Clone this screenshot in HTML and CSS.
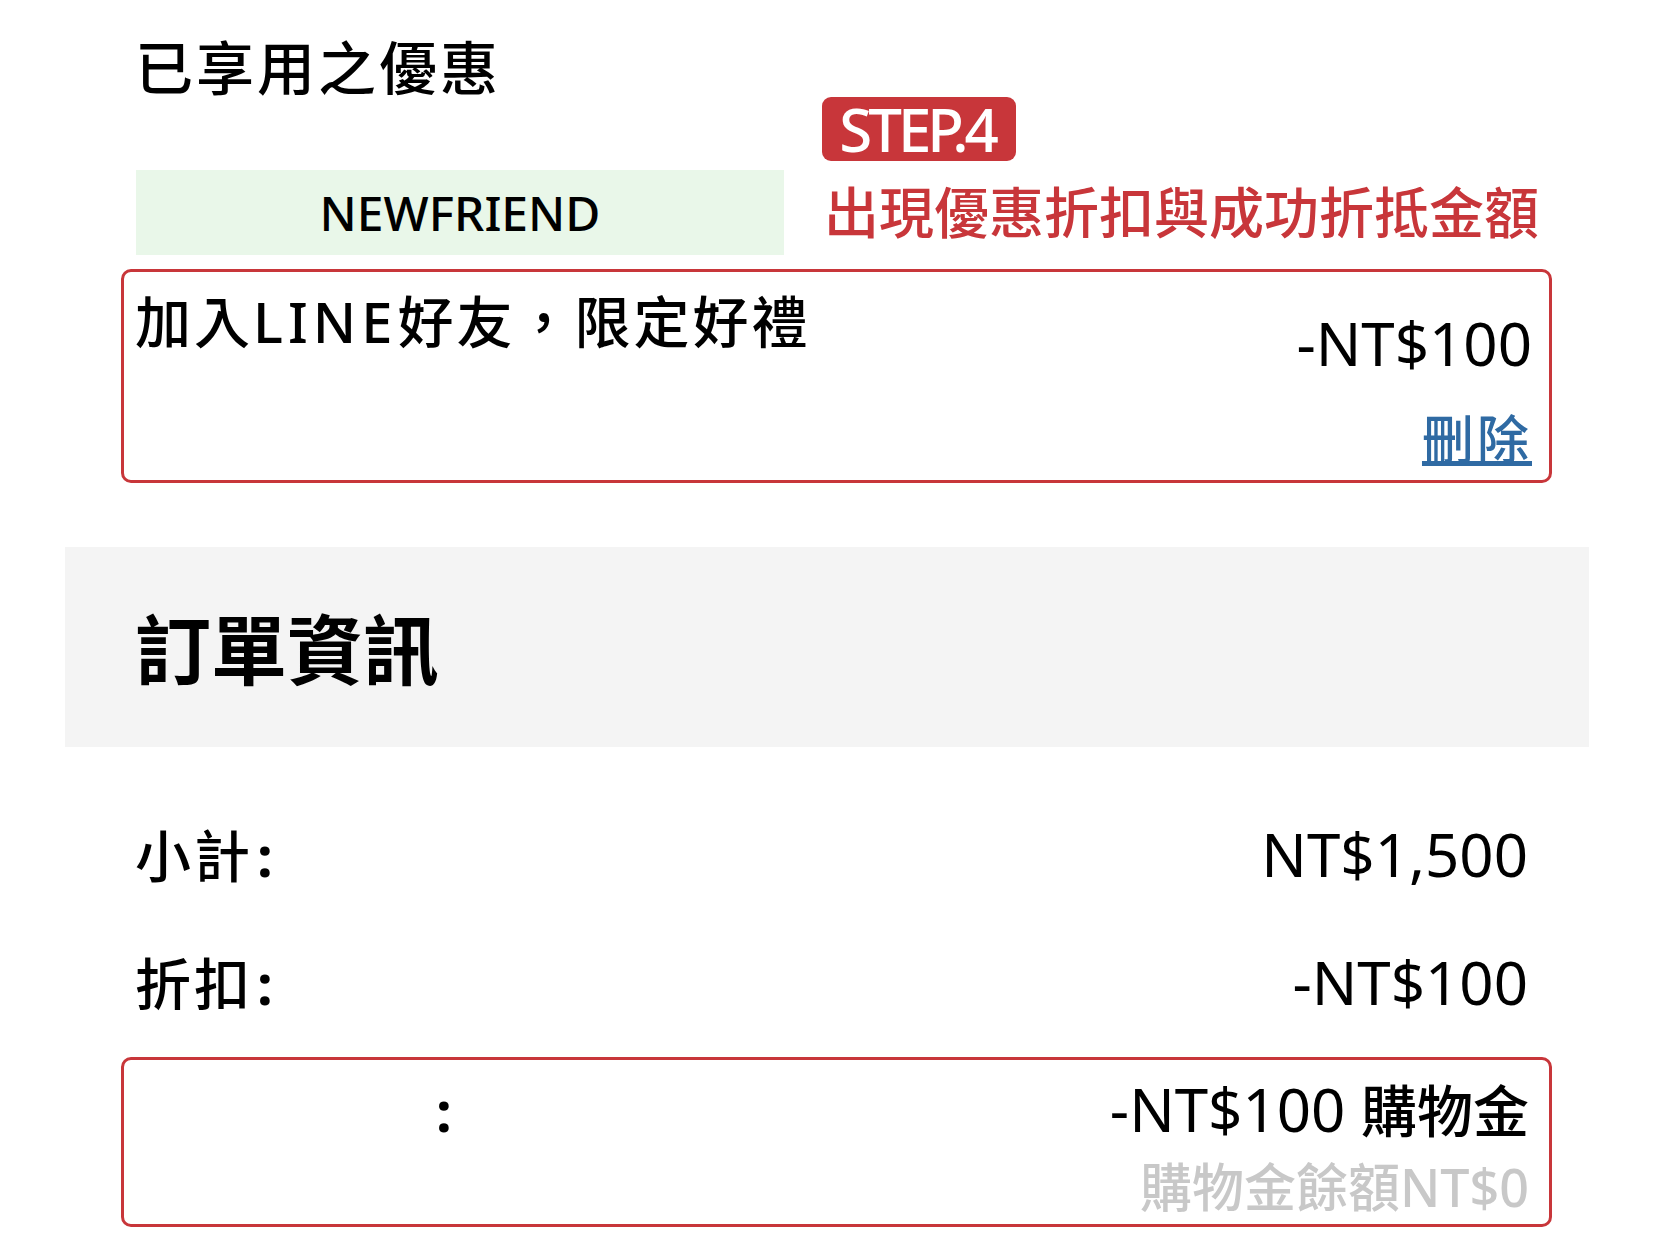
FILE: index.html
```html
<!DOCTYPE html>
<html lang="zh-Hant">
<head>
<meta charset="utf-8">
<title>訂單資訊</title>
<link rel="stylesheet" href="styles.css">
</head>
<body>
<div class="page">
  <section class="coupons">
    <h2 class="title">已享用之優惠</h2>
    <div class="code-row">
      <div class="code-box">NEWFRIEND</div>
      <div class="annotation">
        <span class="step">STEP.4</span>
        <p class="note">出現優惠折扣與成功折抵金額</p>
      </div>
    </div>
    <div class="highlight coupon">
      <div class="coupon-name">加入<span class="latin">LINE</span>好友，限定好禮</div>
      <div class="coupon-side">
        <div class="amount">-NT$100</div>
        <a class="remove" href="#">刪除</a>
      </div>
    </div>
  </section>

  <div class="band">
    <h2 class="band-title">訂單資訊</h2>
  </div>

  <section class="summary">
    <div class="row first">
      <span class="label">小計<span class="colon">:</span></span>
      <span class="amount">NT$1,500</span>
    </div>
    <div class="row second">
      <span class="label">折扣<span class="colon">:</span></span>
      <span class="amount">-NT$100</span>
    </div>
    <div class="highlight credit">
      <div class="row">
        <span class="label blank"><span class="colon">:</span></span>
        <span class="amount">-NT$100 <span class="cjk">購物金</span></span>
      </div>
      <div class="balance">購物金餘額NT$0</div>
    </div>
  </section>
</div>
</body>
</html>
```

FILE: styles.css
```css
html, body {
  margin: 0;
  padding: 0;
  background: #ffffff;
}

body {
  font-family: "Noto Sans", "Noto Sans CJK TC", sans-serif;
  color: #000000;
}

.page {
  padding: 39px 66px 0 65px;
}

.coupons {
  padding: 0 61px 0 70px;
}

.title {
  margin: 0;
  font-size: 58px;
  line-height: 1;
  font-weight: 500;
  letter-spacing: 3px;
}

.code-row {
  display: flex;
  align-items: flex-start;
}

.code-box {
  margin-top: 73px;
  margin-left: 1px;
  width: 648px;
  height: 85px;
  flex: none;
  background: #e9f7e9;
  display: flex;
  align-items: center;
  justify-content: center;
  font-size: 48px;
  font-weight: 500;
  line-height: 1;
}

.annotation {
  margin-left: 38px;
  display: flex;
  flex-direction: column;
  align-items: flex-start;
}

.step {
  display: inline-flex;
  align-items: center;
  justify-content: center;
  width: 194px;
  height: 64px;
  background: #c8363a;
  border-radius: 9px;
  color: #ffffff;
  font-size: 60px;
  font-weight: 500;
  letter-spacing: -4px;
  line-height: 1;
  padding-right: 4px;
  box-sizing: border-box;
}

.note {
  margin: 23px 0 0 2px;
  color: #c8363a;
  font-size: 55px;
  font-weight: 500;
  line-height: 1;
  white-space: nowrap;
}

.highlight {
  border: 3px solid #c8363a;
  border-radius: 10px;
}

.coupon {
  margin: 14px -24px 0 -14px;
  padding: 21px 17px 15px 11px;
  display: flex;
  justify-content: space-between;
  align-items: flex-start;
}

.coupon-name {
  font-size: 56px;
  font-weight: 500;
  line-height: 1;
  letter-spacing: 3px;
}

.coupon-name .latin {
  letter-spacing: 5px;
}

.coupon-side {
  margin-top: 20px;
  display: flex;
  flex-direction: column;
  align-items: flex-end;
}

.amount {
  font-size: 60px;
  line-height: 1;
}

.remove {
  margin-top: 40px;
  font-size: 52px;
  font-weight: 500;
  line-height: 1;
  letter-spacing: 3px;
  color: #2f6aa3;
  text-decoration: underline;
  text-underline-offset: 2px;
}

.band {
  margin-top: 64px;
  height: 200px;
  box-sizing: border-box;
  background: #f4f4f4;
  padding: 65px 0 0 70px;
}

.band-title {
  margin: 0;
  font-size: 76px;
  line-height: 1;
  font-weight: 700;
}

.summary {
  padding: 0 61px 0 70px;
}

.row {
  display: flex;
  justify-content: space-between;
  align-items: baseline;
}

.row.first {
  margin-top: 77px;
}

.row.second {
  margin-top: 68px;
}

.label {
  font-size: 56px;
  font-weight: 500;
  line-height: 1;
  letter-spacing: 3px;
}

.colon {
  margin-left: 4px;
  font-weight: 700;
}

.label.blank {
  padding-left: 301px;
}

.label.blank .colon {
  margin-left: 0;
}

.cjk {
  font-size: 56px;
  font-weight: 500;
}

.credit {
  margin: 45px -24px 0 -14px;
  padding: 19px 20px 11px 11px;
}

.credit .row .amount {
  white-space: nowrap;
}

.balance {
  margin-top: 22px;
  text-align: right;
  font-size: 52px;
  font-weight: 500;
  line-height: 1;
  color: #c8c8c8;
}
```
